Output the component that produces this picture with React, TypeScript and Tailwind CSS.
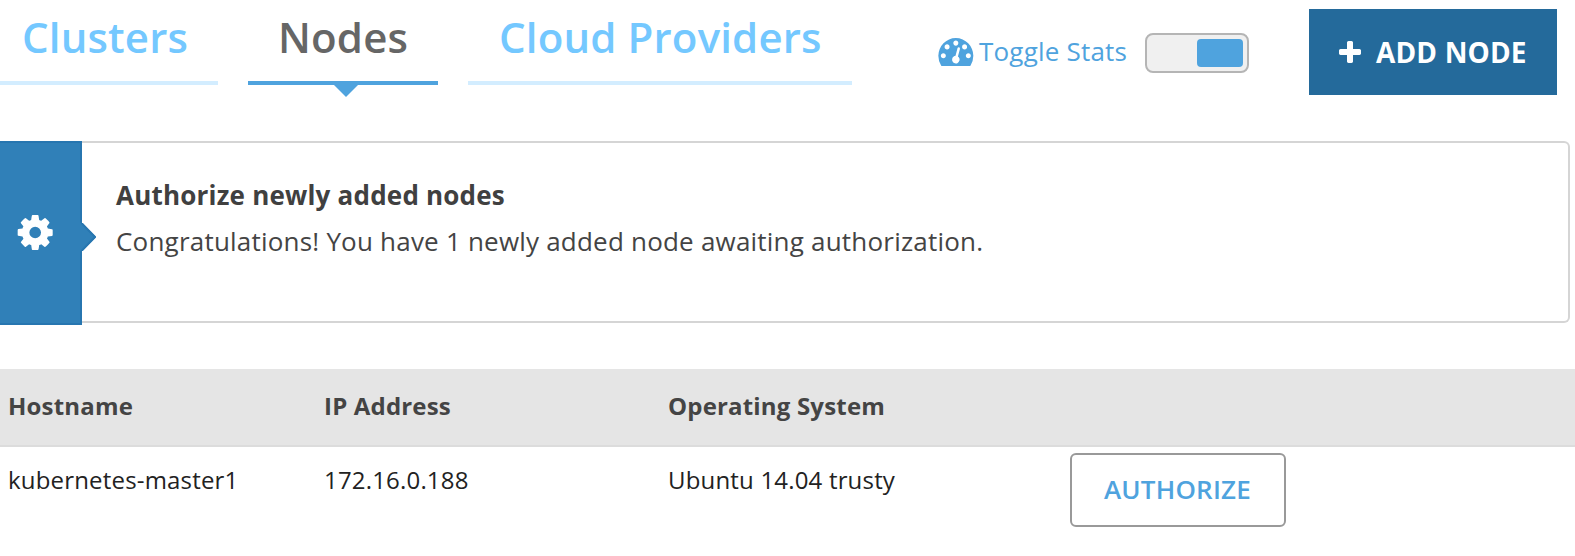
import React from "react";

const TABS = [
  { label: "Clusters", box: "w-[218px] pl-[22px]", active: false },
  { label: "Nodes", box: "w-[190px] pl-[30px]", active: true },
  { label: "Cloud Providers", box: "w-[384px] pl-[31px]", active: false },
];

function GaugeIcon() {
  return (
    <svg className="mb-[2px] h-[28px] w-[35px] shrink-0 overflow-visible" viewBox="-17 256 1792 1408" preserveAspectRatio="none" fill="currentColor">
      <path d="M384 1152q0-53-37.5-90.5t-90.5-37.5-90.5 37.5-37.5 90.5 37.5 90.5 90.5 37.5 90.5-37.5 37.5-90.5zm192-448q0-53-37.5-90.5t-90.5-37.5-90.5 37.5-37.5 90.5 37.5 90.5 90.5 37.5 90.5-37.5 37.5-90.5zm428 481l101-382q6-26-7.5-48.5t-38.5-29.5-48 6.5-30 39.5l-101 382q-60 5-107 43.5t-63 98.5q-20 77 20 146t117 89 146-20 89-117q16-60-6-117t-72-91zm660-33q0-53-37.5-90.5t-90.5-37.5-90.5 37.5-37.5 90.5 37.5 90.5 90.5 37.5 90.5-37.5 37.5-90.5zm-640-640q0-53-37.5-90.5t-90.5-37.5-90.5 37.5-37.5 90.5 37.5 90.5 90.5 37.5 90.5-37.5 37.5-90.5zm448 192q0-53-37.5-90.5t-90.5-37.5-90.5 37.5-37.5 90.5 37.5 90.5 90.5 37.5 90.5-37.5 37.5-90.5zm320 448q0 261-141 483-19 29-54 29h-1402q-35 0-54-29-141-221-141-483 0-182 71-348t191-286 286-191 348-71 348 71 286 191 191 286 71 348z" />
    </svg>
  );
}

function CogIcon() {
  return (
    <svg className="h-[35px] w-[35px] overflow-visible" viewBox="142 128 1536 1536" fill="currentColor">
      <path d="M1152 896q0-106-75-181t-181-75-181 75-75 181 75 181 181 75 181-75 75-181zm512-109v222q0 12-8 23t-20 13l-185 28q-19 54-39 91 35 50 107 138 10 12 10 25t-9 23q-27 37-99 108t-94 71q-12 0-26-9l-138-108q-44 23-91 38-16 136-29 186-7 28-36 28h-222q-14 0-24.5-8.5t-11.5-21.5l-28-184q-49-16-90-37l-141 107q-10 9-25 9-14 0-25-11-126-114-165-168-7-10-7-23 0-12 8-23 15-21 51-66.5t54-70.5q-27-50-41-99l-183-27q-13-2-21-12.5t-8-23.5v-222q0-12 8-23t19-13l186-28q14-46 39-92-40-57-107-138-10-12-10-24 0-10 9-23 26-36 98.5-107.5t94.5-71.5q13 0 26 10l138 107q44-23 91-38 16-136 29-186 7-28 36-28h222q14 0 24.5 8.5t11.5 21.5l28 184q49 16 90 37l142-107q9-9 24-9 13 0 25 10 129 119 165 170 7 8 7 22 0 12-8 23-15 21-51 66.5t-54 70.5q26 50 41 98l183 28q13 2 21 12.5t8 23.5z" />
    </svg>
  );
}

function PlusIcon() {
  return (
    <svg className="h-[22px] w-[22px] shrink-0" viewBox="192 128 1408 1408" fill="currentColor">
      <path d="M1600 736v192q0 40-28 68t-68 28h-416v416q0 40-28 68t-68 28h-192q-40 0-68-28t-28-68v-416h-416q-40 0-68-28t-28-68v-192q0-40 28-68t68-28h416v-416q0-40 28-68t68-28h192q40 0 68 28t28 68v416h416q40 0 68 28t28 68z" />
    </svg>
  );
}

function Header() {
  return (
    <header className="flex h-[97px] items-start">
      <nav className="flex gap-[30px]">
        {TABS.map((tab) => (
          <a
            key={tab.label}
            className={
              "relative block h-[85px] shrink-0 border-b-4 text-[42px] leading-[73px] font-semibold tracking-[0.15px] " +
              tab.box +
              (tab.active ? " border-[#4fa3de] text-[#666666]" : " border-[#d3edff] text-[#74c8ff]")
            }
          >
            {tab.label}
            {tab.active && (
              <svg className="absolute top-[85px] left-[86px] h-[12px] w-[24px]" viewBox="0 0 24 12">
                <path d="M0 0H24L12 12Z" fill="#4fa3de" />
              </svg>
            )}
          </a>
        ))}
      </nav>
      <div className="ml-[86px] flex h-[106px] items-center text-[#4fa3de]">
        <GaugeIcon />
        <span className="ml-[6px] w-[166px] pb-[4px] text-[26px] leading-[36px] tracking-[0.2px]">Toggle Stats</span>
        <span className="flex h-[40px] w-[104px] items-center justify-end rounded-lg border-2 border-[#b5b5b5] bg-[#f0f0f0] pr-1">
          <span className="h-[28px] w-[46px] rounded bg-[#4fa3de]" />
        </span>
      </div>
      <button className="mt-[9px] ml-[60px] flex h-[86px] w-[248px] items-center bg-[#246a9b] pl-[30px] text-[28px] font-bold tracking-[0.15px] text-white">
        <PlusIcon />
        <span className="ml-[15px]">ADD NODE</span>
      </button>
    </header>
  );
}

function Notice() {
  return (
    <section className="mt-[44px] flex h-[184px] w-[1570px]">
      <div className="relative flex w-[82px] shrink-0 justify-start border-2 border-l-0 border-[#2776b0] bg-[#3080b8] pt-[72px] pl-[18px] text-white">
        <CogIcon />
        <svg className="absolute top-[80px] left-[80px] h-[28px] w-[16px]" viewBox="0 0 16 28">
          <path d="M0 0H2L16 14L2 28H0Z" fill="#3080b8" />
          <path d="M1.5 0L15 14L1.5 28" fill="none" stroke="#2776b0" strokeWidth="2" />
        </svg>
      </div>
      <div className="h-[182px] flex-1 rounded-r-md border-2 border-l-0 border-[#d5d5d5] pt-[29px] pl-[34px] text-[26px] leading-[46px] tracking-[0.21px] text-[#444444]">
        <h2 className="font-bold text-[#404040]">Authorize newly added nodes</h2>
        <p>Congratulations! You have 1 newly added node awaiting authorization.</p>
      </div>
    </section>
  );
}

const COLUMNS = "grid grid-cols-[316px_344px_402px_1fr] pl-2 text-[24px] tracking-[0.18px]";

function NodeTable() {
  return (
    <section className="mt-[44px]">
      <div className={COLUMNS + " h-[78px] border-b-2 border-[#dcdcdc] bg-[#e5e5e5] leading-[74px] font-bold text-[#444444]"}>
        <span>Hostname</span>
        <span>IP Address</span>
        <span>Operating System</span>
      </div>
      <div className={COLUMNS + " pt-[6px] leading-[54px] text-[#222222]"}>
        <span>kubernetes-master1</span>
        <span>172.16.0.188</span>
        <span>Ubuntu 14.04 trusty</span>
        <button className="flex h-[74px] w-[216px] items-center rounded-md border-2 border-[#999999] pb-[2px] pl-[32px] text-[26px] font-semibold text-[#4fa3de]">
          AUTHORIZE
        </button>
      </div>
    </section>
  );
}

export default function App() {
  return (
    <main className="h-[556px] w-[1575px] overflow-hidden bg-white font-['Open_Sans',sans-serif] whitespace-nowrap">
      <Header />
      <Notice />
      <NodeTable />
    </main>
  );
}
